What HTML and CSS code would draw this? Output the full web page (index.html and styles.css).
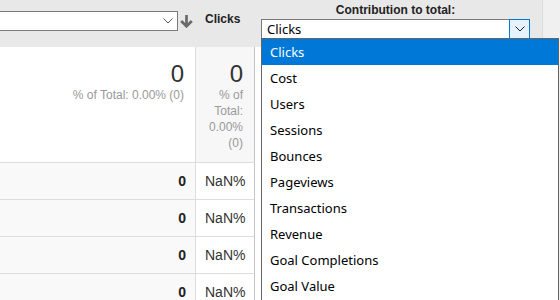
FILE: index.html
```html
<!DOCTYPE html>
<html>
<head>
<meta charset="utf-8">
<link rel="stylesheet" href="styles.css">
</head>
<body>
<div class="page">
  <div class="main">
    <div class="topbar">
      <div class="sel-left">
        <svg class="chev" width="10" height="6" viewBox="0 0 10 6"><path d="M0.5 0.5 L5 5 L9.5 0.5" fill="none" stroke="#555" stroke-width="1"/></svg>
      </div>
      <svg class="sort-arrow" width="13" height="13" viewBox="0 0 13 13"><path d="M6.5 0 V11 M1.2 6 L6.5 11.3 L11.8 6" fill="none" stroke="#6a6a6a" stroke-width="2.7"/></svg>
      <div class="metric-label">Clicks</div>
      <div class="contrib">
        <div class="contrib-label">Contribution to total:</div>
        <div class="combo">
          <span class="combo-value">Clicks</span>
          <span class="combo-btn"><svg width="10" height="6" viewBox="0 0 10 6"><path d="M0.5 0.5 L5 5 L9.5 0.5" fill="none" stroke="#222" stroke-width="1"/></svg></span>
          <ul class="listbox">
            <li class="selected">Clicks</li>
            <li>Cost</li>
            <li>Users</li>
            <li>Sessions</li>
            <li>Bounces</li>
            <li>Pageviews</li>
            <li>Transactions</li>
            <li>Revenue</li>
            <li>Goal Completions</li>
            <li>Goal Value</li>
          </ul>
        </div>
      </div>
    </div>
    <div class="table">
      <div class="row head">
        <div class="cell c1"><div class="big">0</div><div class="sub">% of Total: 0.00% (0)</div></div>
        <div class="cell c2"><div class="big">0</div><div class="sub">% of Total: 0.00% (0)</div></div>
      </div>
      <div class="row data">
        <div class="cell c1">0</div>
        <div class="cell c2">NaN%</div>
      </div>
      <div class="row data">
        <div class="cell c1">0</div>
        <div class="cell c2">NaN%</div>
      </div>
      <div class="row data">
        <div class="cell c1">0</div>
        <div class="cell c2">NaN%</div>
      </div>
      <div class="row data">
        <div class="cell c1">0</div>
        <div class="cell c2">NaN%</div>
      </div>
    </div>
  </div>
  <div class="strip"></div>
</div>
</body>
</html>
```

FILE: styles.css
```css
html, body {
  margin: 0;
  padding: 0;
}
body {
  font-family: "Liberation Sans", Arial, sans-serif;
  background: #fff;
}
.page {
  width: 560px;
  height: 300px;
  overflow: hidden;
  display: flex;
}
.main {
  width: 542px;
  flex: none;
  position: relative;
  z-index: 1;
}
.strip {
  flex: 1;
  background: #f0f0f0;
  border-left: 1px solid #dcdcdc;
}
.topbar {
  height: 47px;
  background: #e8e8e8;
  display: flex;
  align-items: flex-start;
}
.sel-left {
  margin: 11px 0 0 -10px;
  width: 188px;
  height: 20px;
  box-sizing: border-box;
  border: 1px solid #7a7a7a;
  background: #fff;
  display: flex;
  align-items: center;
  justify-content: flex-end;
  padding-right: 4px;
}
.sort-arrow {
  margin: 15px 0 0 2px;
  flex: none;
}
.metric-label {
  margin: 11px 0 0 12px;
  width: 56px;
  font-weight: bold;
  font-size: 12px;
  line-height: 16px;
  color: #222;
}
.contrib {
  margin-top: 3px;
  width: 269px;
}
.contrib-label {
  text-align: center;
  font-weight: bold;
  font-size: 12px;
  line-height: 14px;
  color: #222;
}
.combo {
  margin-top: 2px;
  display: flex;
  height: 20px;
  position: relative;
}
.combo-value {
  flex: 1;
  border: 1px solid #7a7a7a;
  border-right: 0;
  background: #fff;
  font-family: "Noto Sans", sans-serif;
  font-size: 13px;
  line-height: 18px;
  padding-left: 5px;
  color: #000;
}
.combo-btn {
  width: 21px;
  box-sizing: border-box;
  border: 1px solid #0078d7;
  background: #e5f1fb;
  display: flex;
  align-items: center;
  justify-content: center;
}
.listbox {
  position: absolute;
  left: 0;
  top: 19px;
  width: 298px;
  height: 290px;
  box-sizing: border-box;
  border: 1px solid #646464;
  background: #fff;
  margin: 0;
  padding: 0;
  list-style: none;
  font-family: "Noto Sans", sans-serif;
  font-size: 13px;
  z-index: 2;
}
.listbox li {
  height: 26px;
  line-height: 27px;
  padding-left: 8px;
  color: #000;
}
.listbox li.selected {
  background: #0078d7;
  color: #fff;
}
.row {
  display: flex;
}
.cell {
  box-sizing: border-box;
  border-bottom: 1px solid #ddd;
}
.c1 {
  width: 196px;
  border-right: 1px solid #ddd;
}
.c2 {
  width: 59px;
  border-right: 1px solid #c4c4c4;
}
.head .cell {
  height: 116px;
  padding: 13px 11px 10px 8px;
  text-align: right;
}
.head .c2 {
  background: #f7f7f7;
}
.big {
  font-size: 24px;
  line-height: 27px;
  color: #333;
}
.sub {
  font-size: 12px;
  line-height: 16px;
  color: #999;
}
.data .cell {
  height: 37px;
  display: flex;
  align-items: center;
  font-size: 14px;
}
.data .c1 {
  background: #f9f9f9;
  justify-content: flex-end;
  padding-right: 9px;
  font-weight: bold;
  color: #222;
}
.data .c2 {
  padding-left: 9px;
  color: #333;
  background: #fff;
}
```
